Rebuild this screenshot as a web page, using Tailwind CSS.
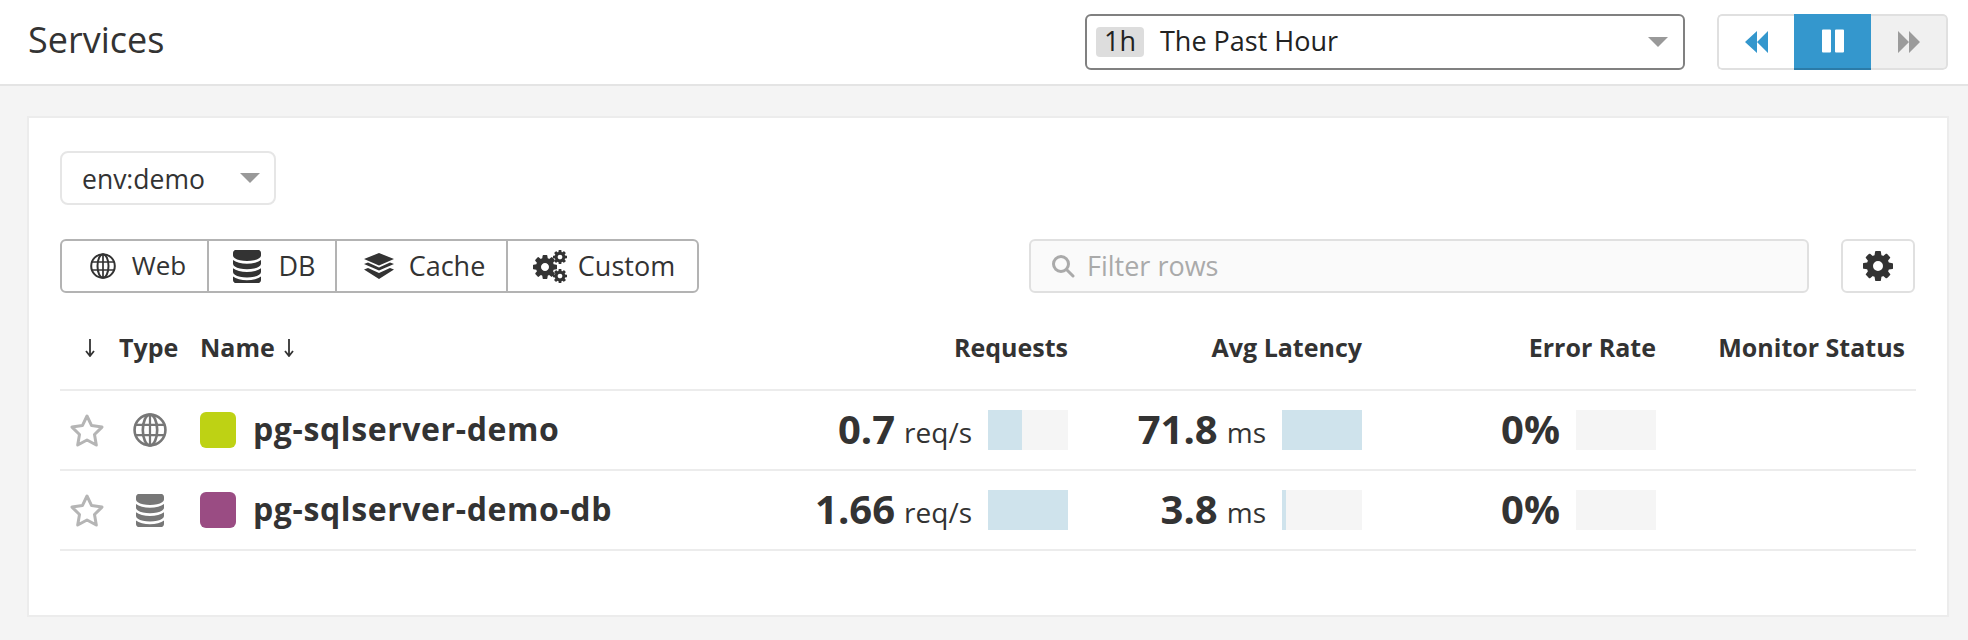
<!DOCTYPE html>
<html>
<head>
<meta charset="utf-8">
<script src="https://cdn.jsdelivr.net/npm/@tailwindcss/browser@4"></script>
<title>Services</title>
</head>
<body class="m-0 h-[640px] w-[1968px] overflow-hidden bg-[#f4f4f4] font-['Open_Sans',sans-serif] text-[#333333]">
<svg class="hidden" width="0" height="0">
  <symbol id="cog" viewBox="128 128 1536 1536"><path fill="currentColor" d="M1152 896q0-106-75-181t-181-75-181 75-75 181 75 181 181 75 181-75 75-181zm512-109v222q0 12-8 23t-20 13l-185 28q-19 54-39 91 35 50 107 138 10 12 10 25t-9 23q-27 37-99 108t-94 71q-12 0-26-9l-138-108q-44 23-91 38-16 136-29 186-7 28-36 28h-222q-14 0-24.5-8.5t-11.5-21.5l-28-184q-49-16-90-37l-141 107q-10 9-25 9-14 0-25-11-126-114-165-168-7-10-7-23 0-12 8-23 15-21 51-66.5t54-70.5q-27-50-41-99l-183-27q-13-2-21-12.5t-8-23.5v-222q0-12 8-23t19-13l186-28q14-46 39-92-40-57-107-138-10-12-10-24 0-10 9-23 26-36 98.5-107.5t94.5-71.5q13 0 26 10l138 107q44-23 91-38 16-136 29-186 7-28 36-28h222q14 0 24.5 8.5t11.5 21.5l28 184q49 16 90 37l142-107q9-9 24-9 13 0 25 10 129 119 165 170 7 8 7 22 0 12-8 23-15 21-51 66.5t-54 70.5q26 50 41 98l183 28q13 2 21 12.5t8 23.5z"/></symbol>
  <symbol id="db" viewBox="128 128 1536 1536" preserveAspectRatio="none"><path fill="currentColor" d="M896 768q237 0 443-43t325-127v170q0 69-103 128t-280 93.5-385 34.5-385-34.5-280-93.5-103-128v-170q119 84 325 127t443 43zm0 768q237 0 443-43t325-127v170q0 69-103 128t-280 93.5-385 34.5-385-34.5-280-93.5-103-128v-170q119 84 325 127t443 43zm0-384q237 0 443-43t325-127v170q0 69-103 128t-280 93.5-385 34.5-385-34.5-280-93.5-103-128v-170q119 84 325 127t443 43zm0-1152q208 0 385 34.5t280 93.5 103 128v128q0 69-103 128t-280 93.5-385 34.5-385-34.5-280-93.5-103-128v-128q0-69 103-128t280-93.5 385-34.5z"/></symbol>
  <symbol id="globe" viewBox="0 0 26 26"><g fill="none" stroke="currentColor" stroke-width="2"><circle cx="13" cy="13" r="11.800"/><ellipse cx="13" cy="13" rx="5.500" ry="11.800"/><path d="M13 1v24M1.500 9h23M1.500 17h23" stroke-width="1.700"/></g></symbol>
  <symbol id="star" viewBox="0 0 36 34"><path fill="none" stroke="currentColor" stroke-width="3" stroke-linejoin="round" d="M18 3l4.600 9.600 10.400 1.500-7.500 7.400 1.800 10.500-9.300-5-9.300 5 1.800-10.500L3 14.100l10.400-1.500z"/></symbol>
</svg>

<header class="flex h-[86px] items-center border-b-2 border-[#e4e4e4] bg-white pl-[28px] pr-[20px]">
  <h1 class="text-[36px] leading-none font-normal pb-[4px]">Services</h1>
  <div class="ml-auto flex h-[56px] w-[600px] items-center rounded-[6px] border-2 border-[#808080] bg-white pl-[9px] pr-[15px]">
    <span class="flex h-[30px] w-[48px] items-center justify-center rounded-[4px] bg-[#dddddd] pb-[3px] text-[27px] leading-none text-[#222222]">1h</span>
    <span class="ml-[16px] pb-[3px] text-[27px] leading-none text-[#222222]">The Past Hour</span>
    <span class="ml-auto h-0 w-0 border-x-[10px] border-t-[10px] border-x-transparent border-t-[#999999]"></span>
  </div>
  <div class="ml-[32px] flex h-[56px] w-[231px] overflow-hidden rounded-[5px]">
    <button class="flex w-[77px] items-center justify-center rounded-l-[5px] border-y-2 border-l-2 border-[#e0e0e0] bg-white">
      <svg class="h-[24px] w-[24px] text-[#3497cd]" viewBox="0 0 24 24"><path fill="currentColor" d="M0 12L12 1v22zM12 12L23 1v22z"/></svg>
    </button>
    <button class="flex w-[77px] items-center justify-center border-b-2 border-[#2b7ba8] bg-[#3497cd]">
      <svg class="h-[24px] w-[24px] text-white" viewBox="0 0 24 24"><path fill="currentColor" d="M1 1.500a1 1 0 0 1 1-1h7a1 1 0 0 1 1 1v21a1 1 0 0 1-1 1H2a1 1 0 0 1-1-1zM14 1.500a1 1 0 0 1 1-1h7a1 1 0 0 1 1 1v21a1 1 0 0 1-1 1h-7a1 1 0 0 1-1-1z"/></svg>
    </button>
    <button class="flex w-[77px] items-center justify-center rounded-r-[5px] border-y-2 border-r-2 border-[#e0e0e0] bg-[#f0f0f0]">
      <svg class="h-[24px] w-[24px] text-[#9b9b9b]" viewBox="0 0 24 24"><path fill="currentColor" d="M1 1l11 11L1 23zM12 1l11 11-11 11z"/></svg>
    </button>
  </div>
</header>

<main class="ml-[27px] mr-[19px] mt-[30px] h-[501px] border-2 border-[#ececec] bg-white px-[31px] pt-[33px]">
  <div class="flex h-[54px] w-[216px] items-center rounded-[8px] border-2 border-[#e6e6e6] pl-[20px] pr-[14px]">
    <span class="pt-[2px] text-[26.500px] leading-none">env:demo</span>
    <span class="ml-auto h-0 w-0 border-x-[10px] border-t-[10px] border-x-transparent border-t-[#999999]"></span>
  </div>

  <div class="mt-[34px] flex h-[54px] items-stretch">
    <div class="flex w-[639px] rounded-[6px] border-2 border-[#b3b3b3] text-[27px] leading-none">
      <div class="flex w-[147px] items-center justify-center gap-[16px] border-r-2 border-[#b3b3b3] pl-[7px]">
        <svg class="h-[26px] w-[26px]"><use href="#globe"/></svg><span class="pb-[2px] text-[26px]">Web</span>
      </div>
      <div class="flex w-[128px] items-center justify-center gap-[17px] border-r-2 border-[#b3b3b3] pl-[5px]">
        <svg class="h-[33px] w-[28px]"><use href="#db"/></svg><span class="pb-[2px]">DB</span>
      </div>
      <div class="flex w-[171px] items-center justify-center gap-[15px] border-r-2 border-[#b3b3b3] pl-[6px]">
        <svg class="h-[26px] w-[30px]" viewBox="0 0 30 26"><path fill="currentColor" d="M15 0l15 6-15 6.500L0 6zM0 11l4-1.500 11 5 11-5 4 1.500-15 6.500zM0 16.500l4-1.500 11 5 11-5 4 1.500L15 26z"/></svg><span class="pb-[2px]">Cache</span>
      </div>
      <div class="flex flex-1 items-center justify-center gap-[11px] pl-[3px]">
        <span class="relative block h-[33px] w-[34px]">
          <svg class="absolute left-0 top-[5px] h-[24px] w-[24px]"><use href="#cog"/></svg>
          <svg class="absolute right-0 top-0 h-[14px] w-[14px]"><use href="#cog"/></svg>
          <svg class="absolute right-0 bottom-0 h-[14px] w-[14px]"><use href="#cog"/></svg>
        </span><span class="pb-[2px]">Custom</span>
      </div>
    </div>
    <div class="ml-[330px] flex w-[780px] items-center rounded-[6px] border-2 border-[#e0e0e0] bg-[#fafafa] pl-[20px]">
      <svg class="h-[24px] w-[24px] text-[#aaaaaa]" viewBox="0 0 24 24"><g fill="none" stroke="currentColor" stroke-width="3"><circle cx="10" cy="10" r="7.500"/><path d="M15.500 15.500L22 22" stroke-linecap="round"/></g></svg>
      <span class="ml-[12px] pb-[2px] text-[27px] leading-none text-[#aaaaaa]">Filter rows</span>
    </div>
    <div class="ml-[32px] flex w-[74px] items-center justify-center rounded-[6px] border-2 border-[#e0e0e0]">
      <svg class="h-[30px] w-[30px] text-[#333333]"><use href="#cog"/></svg>
    </div>
  </div>

  <div class="grid h-[98px] grid-cols-[140px_578px_290px_294px_294px_260px] items-center border-b-2 border-[#ececec] pt-[13px] text-[25px] font-bold leading-none">
    <div class="flex w-[200px] items-center gap-[23px] pl-[60px]">
      <svg class="ml-[-36px] h-[18px] w-[12px]" viewBox="0 0 12 18"><path fill="none" stroke="#333333" stroke-width="1.800" d="M6 0v16M2 12l4 5 4-5"/></svg>
      <span>Type</span>
    </div>
    <div class="flex items-center gap-[8px]"><span>Name</span><svg class="h-[18px] w-[12px]" viewBox="0 0 12 18"><path fill="none" stroke="#333333" stroke-width="1.800" d="M6 0v16M2 12l4 5 4-5"/></svg></div>
    <div class="text-right">Requests</div>
    <div class="text-right">Avg Latency</div>
    <div class="text-right">Error Rate</div>
    <div class="pr-[11px] text-right">Monitor Status</div>
  </div>

  <div class="grid h-[80px] grid-cols-[140px_578px_290px_294px_294px_260px] items-center border-b-2 border-[#ececec]">
    <div class="flex items-center pl-[9px]">
      <svg class="h-[34px] w-[36px] text-[#b5b5b5]"><use href="#star"/></svg>
      <svg class="ml-[28px] h-[34px] w-[34px] text-[#777777]"><use href="#globe"/></svg>
    </div>
    <div class="flex items-center">
      <span class="h-[36px] w-[36px] rounded-[6px] bg-[#bed214]"></span>
      <span class="ml-[17px] pb-[2px] text-[32px] font-bold leading-none tracking-[0.6px]">pg-sqlserver-demo</span>
    </div>
    <div class="flex items-center justify-end">
      <span class="pb-[2px] text-[40px] font-bold leading-none">0.7</span>
      <span class="ml-[9px] mt-[4px] text-[28px] leading-none">req/s</span>
      <span class="ml-[16px] flex h-[40px] w-[80px] bg-[#f5f5f5]"><span class="h-full w-[34px] bg-[#cfe3ec]"></span></span>
    </div>
    <div class="flex items-center justify-end">
      <span class="pb-[2px] text-[40px] font-bold leading-none">71.8</span>
      <span class="ml-[9px] mt-[4px] text-[28px] leading-none">ms</span>
      <span class="ml-[16px] flex h-[40px] w-[80px] bg-[#cfe3ec]"></span>
    </div>
    <div class="flex items-center justify-end">
      <span class="pb-[2px] text-[40px] font-bold leading-none">0%</span>
      <span class="ml-[16px] flex h-[40px] w-[80px] bg-[#f5f5f5]"></span>
    </div>
    <div></div>
  </div>

  <div class="grid h-[80px] grid-cols-[140px_578px_290px_294px_294px_260px] items-center border-b-2 border-[#ececec]">
    <div class="flex items-center pl-[9px]">
      <svg class="h-[34px] w-[36px] text-[#b5b5b5]"><use href="#star"/></svg>
      <svg class="ml-[31px] h-[33px] w-[28px] text-[#777777]"><use href="#db"/></svg>
    </div>
    <div class="flex items-center">
      <span class="h-[36px] w-[36px] rounded-[6px] bg-[#9a4c83]"></span>
      <span class="ml-[17px] pb-[2px] text-[32px] font-bold leading-none tracking-[0.6px]">pg-sqlserver-demo-db</span>
    </div>
    <div class="flex items-center justify-end">
      <span class="pb-[2px] text-[40px] font-bold leading-none">1.66</span>
      <span class="ml-[9px] mt-[4px] text-[28px] leading-none">req/s</span>
      <span class="ml-[16px] flex h-[40px] w-[80px] bg-[#cfe3ec]"></span>
    </div>
    <div class="flex items-center justify-end">
      <span class="pb-[2px] text-[40px] font-bold leading-none">3.8</span>
      <span class="ml-[9px] mt-[4px] text-[28px] leading-none">ms</span>
      <span class="ml-[16px] flex h-[40px] w-[80px] bg-[#f5f5f5]"><span class="h-full w-[4px] bg-[#cfe3ec]"></span></span>
    </div>
    <div class="flex items-center justify-end">
      <span class="pb-[2px] text-[40px] font-bold leading-none">0%</span>
      <span class="ml-[16px] flex h-[40px] w-[80px] bg-[#f5f5f5]"></span>
    </div>
    <div></div>
  </div>
</main>
</body>
</html>
